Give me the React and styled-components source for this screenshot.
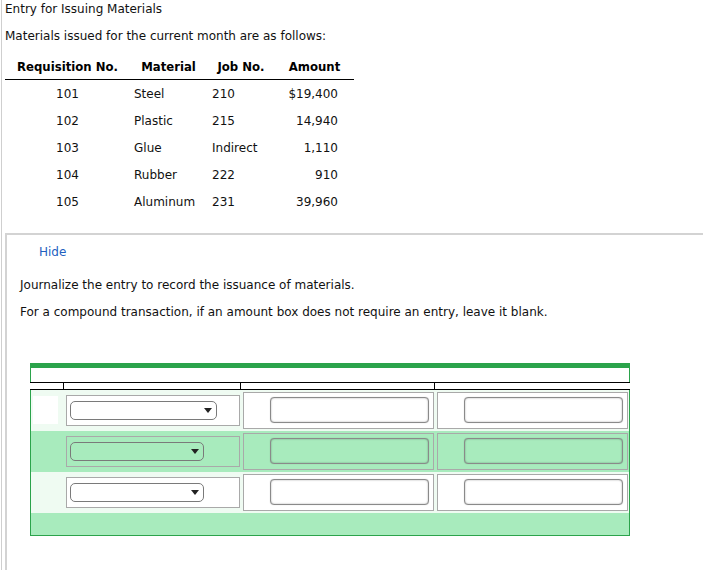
import React from 'react'
import styled, { createGlobalStyle } from 'styled-components'

const GlobalStyle = createGlobalStyle`
    body {
        margin: 0;
        background: #fff;
        font-family: "DejaVu Sans", Verdana, sans-serif;
        font-size: 12px;
        color: #000;
    }
`;

const requisitions = [
    { no: '101', material: 'Steel', job: '210', amount: '$19,400' },
    { no: '102', material: 'Plastic', job: '215', amount: '14,940' },
    { no: '103', material: 'Glue', job: 'Indirect', amount: '1,110' },
    { no: '104', material: 'Rubber', job: '222', amount: '910' },
    { no: '105', material: 'Aluminum', job: '231', amount: '39,960' },
]

const journalRows = [
    { shade: 'light', dateBox: true, selectWidth: 147 },
    { shade: 'green', dateBox: false, selectWidth: 134 },
    { shade: 'light', dateBox: false, selectWidth: 134 },
]

const Arrow = () => (
    <svg width="8" height="5" viewBox="0 0 8 5">
        <path d="M0 0 L8 0 L4 5 Z" fill="#222" />
    </svg>
)

const App = () => {
    return (
        <Page>
            <GlobalStyle />
            <TopSection>
                <Title>Entry for Issuing Materials</Title>
                <Para>Materials issued for the current month are as follows:</Para>
                <DataTable>
                    <colgroup>
                        <col style={{ width: 125 }} />
                        <col style={{ width: 77 }} />
                        <col style={{ width: 68 }} />
                        <col style={{ width: 79 }} />
                    </colgroup>
                    <thead>
                        <tr>
                            <Th>Requisition No.</Th>
                            <Th>Material</Th>
                            <Th>Job No.</Th>
                            <Th>Amount</Th>
                        </tr>
                    </thead>
                    <tbody>
                        {requisitions.map((r) => (
                            <tr key={r.no}>
                                <Td align="center">{r.no}</Td>
                                <Td pad="0 0 0 4px">{r.material}</Td>
                                <Td pad="0 0 0 5px">{r.job}</Td>
                                <Td align="right" pad="0 16px 0 0">{r.amount}</Td>
                            </tr>
                        ))}
                    </tbody>
                </DataTable>
            </TopSection>

            <QuestionBox>
                <HideLink href="#">Hide</HideLink>
                <Instruction>Journalize the entry to record the issuance of materials.</Instruction>
                <Instruction $gap={11}>For a compound transaction, if an amount box does not require an entry, leave it blank.</Instruction>

                <Journal>
                    <TopBar />
                    <HeadSpace />
                    <HeaderRow>
                        <HeaderCell />
                        <HeaderCell />
                        <HeaderCell />
                        <HeaderCell $last />
                    </HeaderRow>
                    <Body>
                        {journalRows.map((row, i) => (
                            <Row key={i} $shade={row.shade}>
                                <DateCell>{row.dateBox && <DateBox />}</DateCell>
                                <AccountCell $shade={row.shade}>
                                    <SelectWrap style={{ width: row.selectWidth }}>
                                        <Select $shade={row.shade} defaultValue="">
                                            <option value=""></option>
                                        </Select>
                                        <ArrowSpot><Arrow /></ArrowSpot>
                                    </SelectWrap>
                                </AccountCell>
                                <AmountCell $shade={row.shade}>
                                    <AmountInput $shade={row.shade} type="text" />
                                </AmountCell>
                                <AmountCell $shade={row.shade}>
                                    <AmountInput $shade={row.shade} type="text" />
                                </AmountCell>
                            </Row>
                        ))}
                        <Footer />
                    </Body>
                </Journal>
            </QuestionBox>
        </Page>
    )
}

export default App


// STYLED COMPONENTS
const Page = styled.div`
    margin-left: 1px;
    border-left: 1px solid #cfcfcf;
    min-height: 570px;
    box-sizing: border-box;
    padding-top: 1px;
`;

const TopSection = styled.div`
    padding-left: 3px;
    padding-bottom: 18px;
`;

const Title = styled.div`
    line-height: 16px;
    color: #111;
`;

const Para = styled.div`
    line-height: 16px;
    margin-top: 11px;
    color: #111;
`;

const DataTable = styled.table`
    border-collapse: collapse;
    margin-top: 10px;
    table-layout: fixed;
    width: 349px;
`;

const Th = styled.th`
    height: 25px;
    font-weight: bold;
    font-size: 11.7px;
    text-align: center;
    border-bottom: 1px solid #000;
    padding: 0;
    vertical-align: middle;
`;

const Td = styled.td`
    height: 27px;
    box-sizing: border-box;
    padding: ${(p) => p.pad || '0'};
    padding-top: 1px;
    text-align: ${(p) => p.align || 'left'};
    vertical-align: middle;
    color: #111;
`;

const QuestionBox = styled.div`
    margin-left: 3px;
    border-top: 2px solid #d3d3d3;
    border-left: 2px solid #d3d3d3;
    padding: 9px 0 40px 13px;
`;

const HideLink = styled.a`
    display: block;
    margin-left: 19px;
    line-height: 16px;
    color: #1f5fbf;
    text-decoration: none;
`;

const Instruction = styled.div`
    line-height: 16px;
    margin-top: ${(p) => p.$gap || 17}px;
    color: #111;
`;

const Journal = styled.div`
    width: 600px;
    margin-top: 43px;
    margin-left: 10px;
`;

const TopBar = styled.div`
    height: 5px;
    background: #2ba34b;
`;

const HeadSpace = styled.div`
    height: 14px;
    border-left: 1px solid #2ba34b;
    border-right: 1px solid #2ba34b;
    background: #fff;
`;

const columns = '34px 177px 194px 195px';

const HeaderRow = styled.div`
    display: grid;
    grid-template-columns: ${columns};
    height: 6px;
    border-top: 1px solid #000;
    border-bottom: 1px solid #000;
    background: #fff;
`;

const HeaderCell = styled.div`
    border-right: ${(p) => (p.$last ? 'none' : '1px solid #000')};
`;

const Body = styled.div`
    border-left: 1px solid #2ba34b;
    border-right: 1px solid #2ba34b;
    border-bottom: 1px solid #2ba34b;
`;

const Row = styled.div`
    display: grid;
    grid-template-columns: 33px 177px 194px 194px;
    height: 41px;
    background: ${(p) => (p.$shade === 'green' ? '#a8ebbd' : '#effbf2')};
`;

const DateCell = styled.div`
    padding: 6px 0 0 2px;
`;

const DateBox = styled.div`
    width: 25px;
    height: 28px;
    background: #fff;
`;

const AccountCell = styled.div`
    align-self: center;
    margin-left: 2px;
    width: 174px;
    height: 31px;
    box-sizing: border-box;
    border: 1px solid #a9a9a9;
    background: ${(p) => (p.$shade === 'green' ? '#a8ebbd' : '#fff')};
    display: flex;
    align-items: center;
    padding-left: 3px;
`;

const SelectWrap = styled.div`
    position: relative;
    height: 19px;
`;

const Select = styled.select`
    appearance: none;
    -webkit-appearance: none;
    width: 100%;
    height: 19px;
    box-sizing: border-box;
    border: 1px solid #7a7a7a;
    border-radius: 5px;
    background: ${(p) => (p.$shade === 'green' ? '#a8ebbd' : '#fff')};
    margin: 0;
    padding: 0 4px;
    font-family: "DejaVu Sans", sans-serif;
    font-size: 11px;
`;

const ArrowSpot = styled.div`
    position: absolute;
    right: 5px;
    top: 7px;
    display: flex;
    pointer-events: none;
`;

const AmountCell = styled.div`
    align-self: center;
    margin-left: 2px;
    width: 191px;
    height: 37px;
    box-sizing: border-box;
    border: 1px solid #a9a9a9;
    background: ${(p) => (p.$shade === 'green' ? '#a8ebbd' : '#fff')};
    display: flex;
    align-items: center;
    justify-content: flex-end;
    padding-right: 4px;
`;

const AmountInput = styled.input`
    width: 159px;
    height: 26px;
    box-sizing: border-box;
    border: 1px solid #8a8a8a;
    border-radius: 4px;
    box-shadow: inset 0 0 2px rgba(0, 0, 0, 0.35), 0 0 1px rgba(0, 0, 0, 0.25);
    background: ${(p) => (p.$shade === 'green' ? '#a8ebbd' : '#fff')};
    margin: 0;
    padding: 0 4px;
    font-family: "DejaVu Sans", sans-serif;
    font-size: 11px;
    outline: none;
`;

const Footer = styled.div`
    height: 22px;
    background: #a8ebbd;
`;
